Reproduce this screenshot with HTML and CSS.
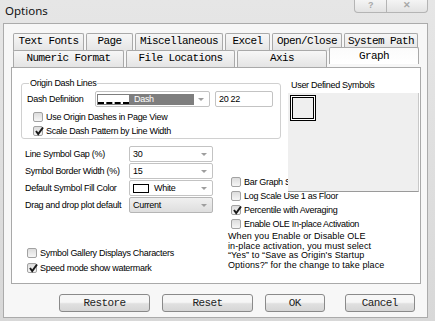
FILE: index.html
```html
<!DOCTYPE html>
<html lang="en">
<head>
    <meta charset="UTF-8">
    <title>Options</title>
    <link rel="stylesheet" href="styles.css">
</head>
<body>
    <div class="window">
        <div class="titlebar">
            <span class="title">Options</span>
            <div class="caption">
                <span class="cap help">?</span>
                <span class="cap close">&#x2715;</span>
            </div>
        </div>

        <div class="client">
            <div class="tabs">
                <div class="tab-row">
                    <div class="tab w71">Text Fonts</div>
                    <div class="tab w47">Page</div>
                    <div class="tab w88">Miscellaneous</div>
                    <div class="tab w45">Excel</div>
                    <div class="tab w70">Open/Close</div>
                    <div class="tab w74">System Path</div>
                </div>
                <div class="tab-row">
                    <div class="tab w111">Numeric Format</div>
                    <div class="tab w109">File Locations</div>
                    <div class="tab w90">Axis</div>
                    <div class="tab w90 active">Graph</div>
                </div>
            </div>

            <div class="panel">
                <div class="group">
                    <span class="legend">Origin Dash Lines</span>
                    <div class="dash-row">
                        <span class="dash-label">Dash Definition</span>
                        <div class="combo dash-combo">
                            <div class="dash-sel">
                                <span class="dash-sample"></span>
                                <span class="dash-name">Dash</span>
                            </div>
                            <span class="arrow"></span>
                        </div>
                        <div class="textbox">20 22</div>
                    </div>
                    <div class="check in-group"><span class="box"></span>Use Origin Dashes in Page View</div>
                    <div class="check in-group"><span class="box checked"><svg viewBox="0 0 10 10"><path d="M2 5 L4.2 8 L9 1.5" /></svg></span>Scale Dash Pattern by Line Width</div>
                </div>

                <div class="symbols">
                    <div class="symbols-label">User Defined Symbols</div>
                    <div class="symbols-box">
                        <div class="symbol-cell"></div>
                    </div>
                </div>

                <div class="lower">
                    <div class="left-col">
                        <div class="fields">
                            <span class="field-label">Line Symbol Gap (%)</span>
                            <div class="combo"><span class="value">30</span><span class="arrow"></span></div>
                            <span class="field-label">Symbol Border Width (%)</span>
                            <div class="combo"><span class="value">15</span><span class="arrow"></span></div>
                            <span class="field-label">Default Symbol Fill Color</span>
                            <div class="combo"><span class="swatch"></span><span class="value">White</span><span class="arrow"></span></div>
                            <span class="field-label">Drag and drop plot default</span>
                            <div class="combo list"><span class="value">Current</span><span class="arrow"></span></div>
                        </div>
                        <div class="left-checks">
                            <div class="check"><span class="box"></span>Symbol Gallery Displays Characters</div>
                            <div class="check"><span class="box checked"><svg viewBox="0 0 10 10"><path d="M2 5 L4.2 8 L9 1.5" /></svg></span>Speed mode show watermark</div>
                        </div>
                    </div>
                    <div class="right-col">
                        <div class="check row14"><span class="box"></span>Bar Graph Start at Zero</div>
                        <div class="check row14"><span class="box"></span>Log Scale Use 1 as Floor</div>
                        <div class="check row14"><span class="box checked"><svg viewBox="0 0 10 10"><path d="M2 5 L4.2 8 L9 1.5" /></svg></span>Percentile with Averaging</div>
                        <div class="check row14"><span class="box"></span>Enable OLE In-place Activation</div>
                        <p class="note">When you Enable or Disable OLE<br>in-place activation, you must select<br>&ldquo;Yes&rdquo; to &ldquo;Save as Origin's Startup<br>Options?&rdquo; for the change to take place</p>
                    </div>
                </div>
            </div>

            <div class="buttons">
                <button class="btn w93">Restore</button>
                <button class="btn w93">Reset</button>
                <button class="btn w61">OK</button>
                <button class="btn w72">Cancel</button>
            </div>
        </div>
    </div>
</body>
</html>
```

FILE: styles.css
```css
* {
    box-sizing: border-box;
}
body {
    margin: 0;
    font-family: 'Liberation Sans', Arial, sans-serif;
    font-size: 9px;
    letter-spacing: -0.3px;
    color: #000;
    background: #dcdcdc;
}
.window {
    width: 435px;
    height: 321px;
    background: linear-gradient(#e6e6e6, #d8d8d8);
    overflow: hidden;
}

/* title bar */
.titlebar {
    height: 23px;
    display: flex;
    align-items: flex-start;
}
.title {
    font-family: 'Noto Sans', 'Open Sans', sans-serif;
    font-size: 11.5px;
    letter-spacing: 0;
    margin: 3px 0 0 5px;
    color: #111;
}
.caption {
    display: flex;
    margin-left: auto;
    margin-right: 7px;
}
.cap {
    height: 13px;
    border: 1px solid #b4b4b4;
    border-top: none;
    background: linear-gradient(#f4f4f4, #e2e2e2);
    color: #a8a8a8;
    font-weight: bold;
    font-size: 9px;
    text-align: center;
    line-height: 11px;
}
.help {
    width: 33px;
    border-radius: 0 0 0 4px;
}
.close {
    width: 41px;
    border-left: none;
    border-radius: 0 0 4px 0;
}

/* client area */
.client {
    margin-left: 3px;
    width: 425px;
    height: 295px;
    border: 1px solid #ababab;
    background: #f7f7f7;
}
.tabs {
    margin-top: 9px;
    padding-left: 9px;
}
.tab-row {
    display: flex;
    gap: 2px;
    height: 17px;
    align-items: flex-start;
}
.tab {
    height: 18px;
    border: 1px solid #a9a9a9;
    border-bottom: none;
    border-radius: 2px 2px 0 0;
    background: linear-gradient(#f7f7f7, #e4e4e4);
    font-family: 'Liberation Mono', 'Courier New', monospace;
    font-size: 11px;
    letter-spacing: -0.6px;
    text-align: center;
    line-height: 15px;
    color: #000;
}
.tab-row + .tab-row .tab {
    height: 17px;
}
.tab.active {
    position: relative;
    z-index: 2;
    margin-top: -3px;
    height: 21px;
    background: linear-gradient(#fbfbfb, #ffffff);
    line-height: 17px;
}
.w45 { width: 45px; }
.w47 { width: 47px; }
.w70 { width: 70px; }
.w71 { width: 71px; }
.w74 { width: 74px; }
.w88 { width: 88px; }
.w90 { width: 90px; }
.w109 { width: 109px; }
.w111 { width: 111px; }

/* tab page */
.panel {
    position: relative;
    z-index: 1;
    margin-left: 7px;
    width: 410px;
    height: 217px;
    border: 1px solid #a9a9a9;
    background: #fff;
}
.group {
    position: relative;
    margin: 15px 0 0 9px;
    width: 260px;
    height: 56px;
    border: 1px solid #d0d0d0;
    border-radius: 3px;
    padding: 7px 0 0 5px;
}
.legend {
    position: absolute;
    top: -6px;
    left: 7px;
    padding: 0 1px;
    background: #fff;
    line-height: 11px;
}
.dash-row {
    display: flex;
    align-items: center;
    height: 16px;
}
.dash-label {
    width: 68px;
}
.combo {
    position: relative;
    height: 16px;
    border: 1px solid #c3c3c3;
    border-radius: 2px;
    background: #fff;
    display: flex;
    align-items: center;
    padding-left: 3px;
    white-space: nowrap;
}
.dash-combo {
    width: 115px;
    padding-left: 1px;
}
.dash-sel {
    width: 97px;
    height: 11px;
    background: #7e7e7e;
    display: flex;
    align-items: center;
    padding-left: 1px;
}
.dash-sample {
    width: 31px;
    height: 9px;
    background: #fff;
    border-bottom: 2px dashed #000;
    margin-right: 5px;
}
.dash-name {
    color: #fff;
}
.arrow {
    position: absolute;
    right: 5px;
    top: 6px;
    width: 0;
    height: 0;
    border-left: 3px solid transparent;
    border-right: 3px solid transparent;
    border-top: 3px solid #9e9e9e;
}
.textbox {
    margin-left: 5px;
    width: 58px;
    height: 16px;
    border: 1px solid #c3c3c3;
    border-radius: 2px;
    padding-left: 3px;
    line-height: 14px;
}
.dash-row + .check {
    margin-top: 3px;
}

/* checkboxes */
.check {
    display: flex;
    align-items: center;
    height: 15px;
    white-space: nowrap;
}
.check.in-group {
    height: 14px;
    margin-left: 6px;
}
.check.row14 {
    height: 14px;
}
.box {
    width: 10px;
    height: 10px;
    border: 1px solid #a2a2a2;
    border-radius: 2px;
    background: linear-gradient(#dcdcdc, #f6f6f6);
    margin-right: 3px;
    flex: none;
    position: relative;
}
.box svg {
    position: absolute;
    left: 0;
    top: -1px;
    width: 10px;
    height: 10px;
    fill: none;
    stroke: #1a1a1a;
    stroke-width: 2;
}

/* user defined symbols */
.symbols {
    position: absolute;
    left: 276px;
    top: 12px;
}
.symbols-label {
    padding-left: 3px;
    line-height: 11px;
    height: 13px;
}
.symbols-box {
    width: 131px;
    height: 99px;
    background: #efefef;
    border-right: 1px solid #c8c8c8;
    border-bottom: 1px solid #9a9a9a;
    padding: 2px;
}
.symbol-cell {
    width: 26px;
    height: 26px;
    border: 1px solid #000;
    box-shadow: inset 0 0 0 1px #fff, inset 0 0 0 2px #000;
}

/* lower half */
.lower {
    display: grid;
    grid-template-columns: 203px auto;
    margin: 7px 0 0 13px;
}
.fields {
    display: grid;
    grid-template-columns: 104px 84px;
    grid-auto-rows: 17px;
    align-items: start;
}
.field-label {
    line-height: 16px;
    white-space: nowrap;
}
.value {
    line-height: 14px;
}
.swatch {
    width: 16px;
    height: 9px;
    border: 1px solid #000;
    background: #fff;
    margin-right: 5px;
}
.combo.list {
    background: linear-gradient(#f0f0f0, #dedede);
    border-color: #b5b5b5;
}
.left-checks {
    margin-top: 31px;
    margin-left: 2px;
}
.right-col {
    padding-top: 29px;
}
.right-col .check {
    margin-left: 3px;
}
.note {
    margin: 1px 0 0 0;
    line-height: 9.5px;
    letter-spacing: 0.1px;
    white-space: nowrap;
}

/* bottom buttons */
.buttons {
    display: flex;
    margin: 10px 0 0 55px;
}
.btn {
    height: 18px;
    margin-right: 12px;
    border: 1px solid #8a8a8a;
    border-radius: 3px;
    background: linear-gradient(#f6f6f6 45%, #e0e0e0 55%, #d6d6d6);
    font-family: 'Liberation Mono', 'Courier New', monospace;
    font-size: 11px;
    letter-spacing: -0.6px;
    color: #222;
    padding: 0;
}
.btn.w61 {
    margin-right: 20px;
}
.w93 { width: 93px; }
.w61 { width: 61px; }
.w72 { width: 72px; }
```
